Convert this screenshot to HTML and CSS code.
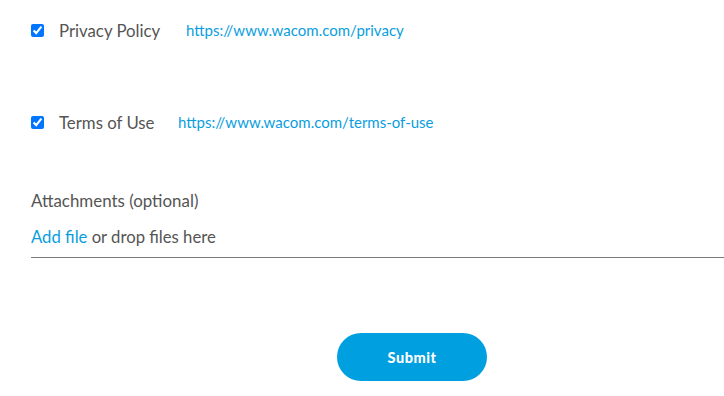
FILE: index.html
```html
<!DOCTYPE html>
<html>
<head>
<meta charset="utf-8">
<link rel="stylesheet" href="styles.css">
</head>
<body>
<form class="form">
  <div class="consent">
    <input type="checkbox" class="check" checked>
    <span class="label">Privacy Policy</span>
    <a class="link" href="#">https://www.wacom.com/privacy</a>
  </div>
  <div class="consent consent-2">
    <input type="checkbox" class="check" checked>
    <span class="label label-short">Terms of Use</span>
    <a class="link" href="#">https://www.wacom.com/terms-of-use</a>
  </div>
  <div class="attach">
    <div class="attach-title">Attachments (optional)</div>
    <div class="drop"><a class="add" href="#">Add file</a> or drop files here</div>
  </div>
  <div class="actions">
    <button type="button" class="submit">Submit</button>
  </div>
</form>
</body>
</html>
```
FILE: styles.css
```css
html, body {
  margin: 0;
  padding: 0;
  background: #fff;
}
body {
  font-family: Lato, "Open Sans", sans-serif;
  color: #555;
  overflow: hidden;
}
.form {
  padding: 21px 0 0 31px;
  display: flex;
  flex-direction: column;
}
.consent {
  display: flex;
  align-items: center;
  height: 18px;
}
.consent-2 {
  margin-top: 74px;
}
.check {
  width: 13px;
  height: 13px;
  margin: 0;
  accent-color: #0075ff;
}
.label {
  font-size: 16.8px;
  margin-left: 15px;
  width: 127px;
}
.label-short {
  width: 119px;
}
.link {
  font-size: 15px;
  color: #0a9ede;
  text-decoration: none;
}
.attach {
  margin-top: 60px;
}
.attach-title {
  font-size: 16.9px;
  line-height: 20px;
}
.drop {
  font-size: 16.7px;
  line-height: 20px;
  margin-top: 16px;
  padding-bottom: 10px;
  border-bottom: 1px solid #7a7a7a;
}
.add {
  color: #0a9ede;
  text-decoration: none;
}
.actions {
  display: flex;
  padding-left: 306px;
  margin-top: 75px;
}
.submit {
  width: 150px;
  height: 48px;
  border: none;
  border-radius: 24px;
  background: #009fdf;
  color: #fff;
  font-family: Lato, sans-serif;
  font-weight: 900;
  font-size: 14.5px;
  letter-spacing: 0.5px;
  cursor: pointer;
}
```
